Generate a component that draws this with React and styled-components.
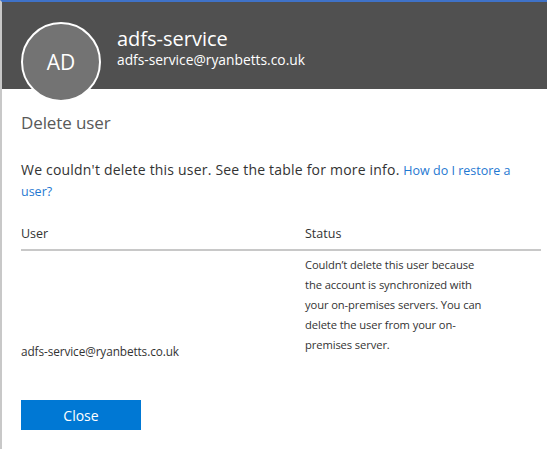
import styled, { createGlobalStyle } from "styled-components";

const GlobalStyle = createGlobalStyle`
  html, body {
    margin: 0;
    padding: 0;
    background: #ffffff;
  }
  body {
    font-family: "Open Sans", "Noto Sans", sans-serif;
    color: #333333;
  }
`;

const Window = styled.div`
  width: 547px;
  height: 449px;
  overflow: hidden;
  box-sizing: border-box;
  border-top: 2px solid #3f72c8;
  border-left: 2px solid #c8c8c8;
  display: flex;
  flex-direction: column;
`;

const Header = styled.header`
  background: #505050;
  height: 87px;
  display: flex;
  align-items: flex-start;
  padding: 20px 0 0 19px;
  box-sizing: border-box;
  flex-shrink: 0;
`;

const Avatar = styled.div`
  width: 76px;
  height: 76px;
  border-radius: 50%;
  border: 2px solid #ffffff;
  background: #737373;
  color: #ffffff;
  font-size: 21px;
  display: flex;
  align-items: center;
  justify-content: center;
  flex-shrink: 0;
  position: relative;
  z-index: 1;
`;

const Identity = styled.div`
  display: flex;
  flex-direction: column;
  margin-left: 16px;
  margin-top: 4px;
  color: #ffffff;
`;

const Name = styled.div`
  font-size: 20px;
  line-height: 25px;
`;

const Email = styled.div`
  font-size: 13.8px;
  line-height: 18px;
`;

const Body = styled.main`
  padding: 23px 6px 0 19px;
  display: flex;
  flex-direction: column;
`;

const Title = styled.h2`
  margin: 0;
  font-weight: 400;
  font-size: 17px;
  line-height: 22px;
  color: #595959;
  letter-spacing: -0.1px;
`;

const Message = styled.p`
  margin: 26px 0 0;
  width: 520px;
  font-size: 14px;
  line-height: 20px;
  color: #333333;
  letter-spacing: 0.2px;
`;

const Link = styled.a`
  color: #1f78d1;
  font-size: 12.5px;
  letter-spacing: 0;
  text-decoration: none;
  cursor: pointer;
`;

const Table = styled.table`
  margin-top: 23px;
  width: 520px;
  border-collapse: collapse;
`;

const HeadCell = styled.th`
  text-align: left;
  font-weight: 400;
  font-size: 12.5px;
  color: #333333;
  padding: 0 0 7px;
  border-bottom: 2px solid #c8c8c8;
  width: ${(p) => p.$width || "auto"};
`;

const Cell = styled.td`
  font-size: 11.8px;
  line-height: 20px;
  color: #333333;
  padding: ${(p) => (p.$wrap ? "4px 0 6px" : "0")};
  vertical-align: bottom;
  letter-spacing: -0.1px;
`;

const StatusText = styled.div`
  width: 182px;
  font-size: 11.2px;
`;

const Actions = styled.div`
  margin-top: 39px;
`;

const Button = styled.button`
  width: 120px;
  height: 30px;
  border: none;
  background: #0078d4;
  color: #ffffff;
  font-family: inherit;
  font-size: 14px;
  padding: 0;
  cursor: pointer;
`;

export default function App() {
  return (
    <>
      <GlobalStyle />
      <Window>
        <Header>
          <Avatar>AD</Avatar>
          <Identity>
            <Name>adfs-service</Name>
            <Email>adfs-service@ryanbetts.co.uk</Email>
          </Identity>
        </Header>
        <Body>
          <Title>Delete user</Title>
          <Message>
            We couldn't delete this user. See the table for more info.{" "}
            <Link>How do I restore a user?</Link>
          </Message>
          <Table>
            <thead>
              <tr>
                <HeadCell $width="284px">User</HeadCell>
                <HeadCell>Status</HeadCell>
              </tr>
            </thead>
            <tbody>
              <tr>
                <Cell>adfs-service@ryanbetts.co.uk</Cell>
                <Cell $wrap>
                  <StatusText>
                    Couldn’t delete this user because the account is
                    synchronized with your on-premises servers. You can delete
                    the user from your on-premises server.
                  </StatusText>
                </Cell>
              </tr>
            </tbody>
          </Table>
          <Actions>
            <Button>Close</Button>
          </Actions>
        </Body>
      </Window>
    </>
  );
}
